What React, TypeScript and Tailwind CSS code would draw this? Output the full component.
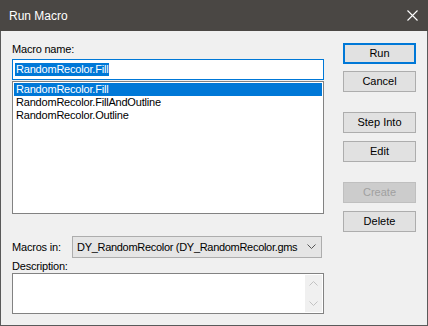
import { memo } from 'react';

const font = { fontFamily: '"Liberation Sans", Arial, sans-serif' };

// Classic dialog push button
function Btn({ label, primary, disabled, className = '' }: { label: string; primary?: boolean; disabled?: boolean; className?: string }) {
  const tone = disabled
    ? 'bg-[#cccccc] border-[#bfbfbf] text-[#a0a0a0]'
    : primary
      ? 'bg-[#e1e1e1] border-2 border-[#0078d7] text-black'
      : 'bg-[#e1e1e1] border-[#adadad] text-black';
  return (
    <div className={`h-[21px] w-[73px] border flex items-center justify-center text-[11px] ${tone} ${className}`}>
      {label}
    </div>
  );
}

const macros = ['RandomRecolor.Fill', 'RandomRecolor.FillAndOutline', 'RandomRecolor.Outline'];

function App() {
  return (
    <div className="w-[428px] h-[326px] bg-[#f0f0f0] border border-t-0 border-[#5a5a5a] flex flex-col" style={font}>
      <div className="h-[31px] -mx-px bg-[#4a4744] flex items-center justify-between pl-[9px] pr-[10px] shrink-0">
        <span className="text-[12px] text-white">Run Macro</span>
        <svg width="11" height="11" viewBox="0 0 11 11">
          <path d="M0.5 0.5 L10.5 10.5 M10.5 0.5 L0.5 10.5" stroke="#ffffff" strokeWidth="1.1" />
        </svg>
      </div>

      <div className="flex pt-[12px] pl-[11px]">
        {/* left column */}
        <div className="w-[312px] flex flex-col text-[11px] tracking-[-0.2px] text-black">
          <div className="h-[13px] leading-[13px]">Macro name:</div>
          <div className="mt-[3px] h-[21px] bg-white border border-[#0078d7] flex items-center pl-[2px]">
            <span className="bg-[#0078d7] text-white leading-[13px] px-px">RandomRecolor.Fill</span>
          </div>
          <div className="mt-px h-[133px] bg-white border border-[#828282] p-px">
            {macros.map((m, i) => (
              <div key={m} className={`h-[13px] leading-[13px] pl-[2px] ${i === 0 ? 'bg-[#0078d7] text-white' : ''}`}>
                {m}
              </div>
            ))}
          </div>

          <div className="mt-[22px] flex items-center">
            <span className="w-[60px]">Macros in:</span>
            <div className="h-[22px] w-[250px] bg-[#e5e5e5] border border-[#adadad] flex items-center pl-[4px] pr-[5px] overflow-hidden">
              <span className="flex-1 whitespace-nowrap overflow-hidden tracking-[-0.3px]">DY_RandomRecolor (DY_RandomRecolor.gms</span>
              <svg width="9" height="6" viewBox="0 0 9 6" className="shrink-0 ml-[3px]">
                <path d="M0.5 0.5 L4.5 4.5 L8.5 0.5" stroke="#555555" fill="none" strokeWidth="1" />
              </svg>
            </div>
          </div>

          <div className="mt-[2px] h-[13px] leading-[13px]">Description:</div>
          <div className="h-[41px] bg-white border border-[#828282] flex justify-end p-px">
            <div className="w-[17px] bg-[#f0f0f0] flex flex-col items-center justify-between py-[6px]">
              <svg width="9" height="5" viewBox="0 0 9 5">
                <path d="M0.5 4.5 L4.5 0.5 L8.5 4.5" stroke="#c2c2c2" fill="none" />
              </svg>
              <svg width="9" height="5" viewBox="0 0 9 5">
                <path d="M0.5 0.5 L4.5 4.5 L8.5 0.5" stroke="#c2c2c2" fill="none" />
              </svg>
            </div>
          </div>
        </div>

        {/* right column */}
        <div className="ml-[19px] flex flex-col">
          <Btn label="Run" primary />
          <Btn label="Cancel" className="mt-[7px]" />
          <Btn label="Step Into" className="mt-[20px]" />
          <Btn label="Edit" className="mt-[8px]" />
          <Btn label="Create" disabled className="mt-[20px]" />
          <Btn label="Delete" className="mt-[8px]" />
        </div>
      </div>
    </div>
  );
}

export default memo(App);
